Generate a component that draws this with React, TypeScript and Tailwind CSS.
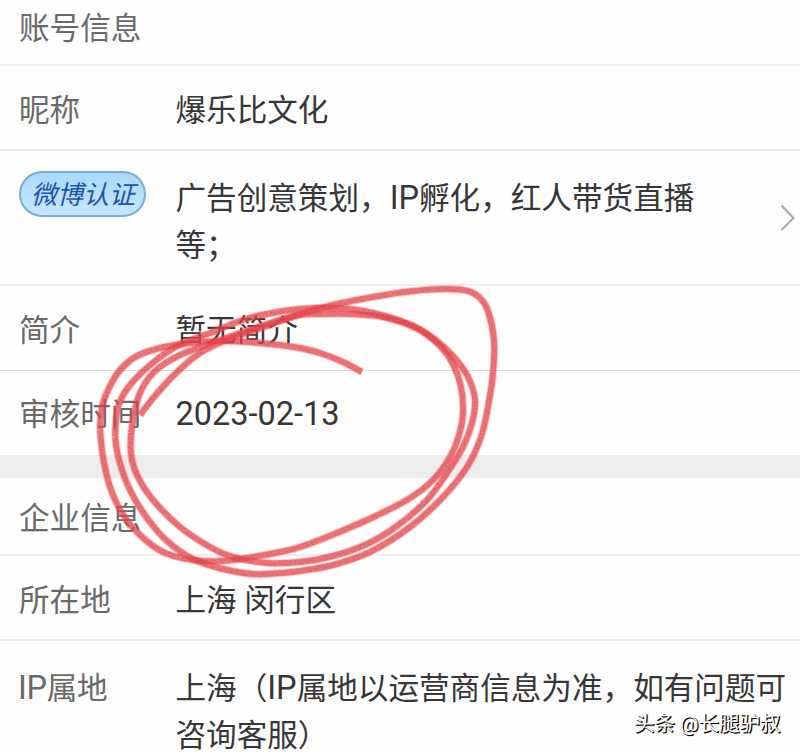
import type { ReactNode } from 'react';

type Point = [number, number];

// One continuous pen stroke, split where it closes each turn so overlaps darken.
const strands: Point[][] = [
  [[140, 415], [154, 397], [173, 376], [197, 355], [224, 341], [267, 326], [300, 314], [333, 305], [373, 297], [413, 291], [447, 289], [468, 291], [480, 298], [488, 311], [494, 340], [493, 373], [488, 407], [481, 437], [467, 467], [443, 497], [410, 527], [370, 552], [333, 565], [300, 571], [280, 573], [253, 574], [223, 569], [193, 559], [167, 541], [147, 518], [130, 490], [119, 460], [115, 437]],
  [[115, 437], [118, 407], [130, 385], [155, 361], [181, 344], [213, 332], [240, 321], [267, 314], [300, 309], [340, 308], [373, 313], [408, 324], [433, 338], [453, 356], [468, 377], [475, 400], [472, 423], [463, 447], [447, 473], [427, 500], [397, 526], [367, 544], [333, 556], [300, 562], [267, 563], [233, 557], [210, 547], [180, 527], [153, 500], [137, 475], [131, 454], [131, 433]],
  [[131, 433], [138, 398], [153, 373], [180, 355], [223, 339], [267, 324], [300, 315], [320, 314], [350, 314], [383, 317], [417, 328], [440, 346], [453, 364], [461, 387], [463, 413], [459, 435], [450, 457], [433, 480], [407, 500], [367, 520], [327, 537], [300, 547], [280, 552], [247, 558], [223, 561], [193, 560], [163, 552], [140, 535], [122, 513], [110, 487], [103, 457], [100, 430]],
  [[100, 430], [102, 407], [109, 388], [120, 370], [137, 356], [160, 348], [190, 343], [223, 341], [247, 342], [280, 345], [300, 348], [320, 353], [343, 362], [362, 372]],
];

function smooth(points: Point[]): string {
  let d = `M${points[0][0]} ${points[0][1]}`;
  for (let i = 0; i < points.length - 1; i++) {
    const a = points[Math.max(0, i - 1)];
    const b = points[i];
    const c = points[i + 1];
    const e = points[Math.min(points.length - 1, i + 2)];
    d += `C${b[0] + (c[0] - a[0]) / 6} ${b[1] + (c[1] - a[1]) / 6} ${c[0] - (e[0] - b[0]) / 6} ${c[1] - (e[1] - b[1]) / 6} ${c[0]} ${c[1]}`;
  }
  return d;
}

function Scribble() {
  return (
    <svg className="pointer-events-none absolute inset-0" width="800" height="752" viewBox="0 0 800 752" fill="none">
      <defs>
        <filter id="crayon" x="0" y="0" width="800" height="752" filterUnits="userSpaceOnUse">
          <feTurbulence type="fractalNoise" baseFrequency="0.75" numOctaves="2" seed="4" result="noise" />
          <feColorMatrix in="noise" type="matrix" values="0 0 0 0 0  0 0 0 0 0  0 0 0 0 0  3 0 0 0 -1" result="grain" />
          <feComposite in="SourceGraphic" in2="grain" operator="in" />
        </filter>
      </defs>
      {strands.map((points, i) => (
        <g key={i}>
          <path d={smooth(points)} stroke="#f8585c" strokeOpacity="0.3" strokeWidth="8" />
          <path d={smooth(points)} stroke="#f0383e" strokeOpacity="0.55" strokeWidth="6" />
          <path d={smooth(points)} stroke="#b84a54" strokeOpacity="0.45" strokeWidth="5" filter="url(#crayon)" />
        </g>
      ))}
    </svg>
  );
}

function Latin({ children }: { children: ReactNode }) {
  return <span className="text-[32.5px] leading-[0]">{children}</span>;
}

function Row({ label, children, className }: { label: ReactNode; children: ReactNode; className: string }) {
  return (
    <div className={`flex shrink-0 pl-[19px] ${className}`}>
      <div className="w-[156.500px] shrink-0 text-[#696969]">{label}</div>
      <div className="min-w-0 flex-1 whitespace-nowrap">{children}</div>
    </div>
  );
}

export default function App() {
  return (
    <div className="relative flex h-[752px] w-[800px] flex-col overflow-hidden bg-[#fefefe] font-[Roboto,'Noto_Sans_CJK_SC',sans-serif] text-[30.6px] leading-[46px] text-[#363636]">
      <div className="h-[66px] shrink-0 border-b-2 border-[#f1f1f1] pt-1.5 pl-[19px] text-[#696969]">账号信息</div>
      <Row label="昵称" className="h-[85px] border-b-2 border-[#e5e5e5] pt-[22px]">爆乐比文化</Row>
      <div className="flex h-[135px] shrink-0 items-start border-b-2 border-[#efefef] pl-[19px]">
        <div className="mt-5 mr-[29.500px] flex h-[46px] w-[127px] shrink-0 items-center justify-center rounded-full border-2 border-[#78aed2] bg-linear-to-b from-[#a9d9fa] to-[#c6e7ff] pt-px pl-px text-[26px] text-[#1a55a8] italic">
          微博认证
        </div>
        <div className="mt-6 flex-1 leading-[47px] whitespace-nowrap">
          <p>广告创意策划，<Latin>IP</Latin>孵化，红人带货直播</p>
          <p>等；</p>
        </div>
        <svg className="mt-[52px] mr-1 shrink-0" width="18" height="28" viewBox="0 0 18 28" fill="none">
          <path d="M3.500 2.500L15.500 15L3.500 27" stroke="#a8a8a8" strokeWidth="2" />
        </svg>
      </div>
      <Row label="简介" className="h-[85px] border-b border-[#dcdcdc] pt-[22px]">暂无简介</Row>
      <Row label="审核时间" className="h-[84px] pt-[21px]"><Latin>2023-02-13</Latin></Row>
      <div className="h-[23px] shrink-0 bg-[#ededed]" />
      <div className="h-[78px] shrink-0 border-b-2 border-[#f1f1f1] pt-[18px] pl-[19px] text-[#696969]">企业信息</div>
      <Row label="所在地" className="h-[85px] border-b-2 border-[#e9e9e9] pt-[22px]">上海 闵行区</Row>
      <Row label={<span className="-ml-px tracking-[-0.3px]"><Latin>IP</Latin>属地</span>} className="h-[112px] pt-6 leading-[47px]">
        <p>上海（<Latin>IP</Latin>属地以运营商信息为准，如有问题可</p>
        <p>咨询客服）</p>
      </Row>
      <Scribble />
      <div className="absolute top-[709px] left-[634px] text-[20.5px] leading-[30px] whitespace-nowrap text-white [text-shadow:1px_1px_0_#000,1px_1px_1px_#000]">
        头条 @长腿驴叔
      </div>
    </div>
  );
}
